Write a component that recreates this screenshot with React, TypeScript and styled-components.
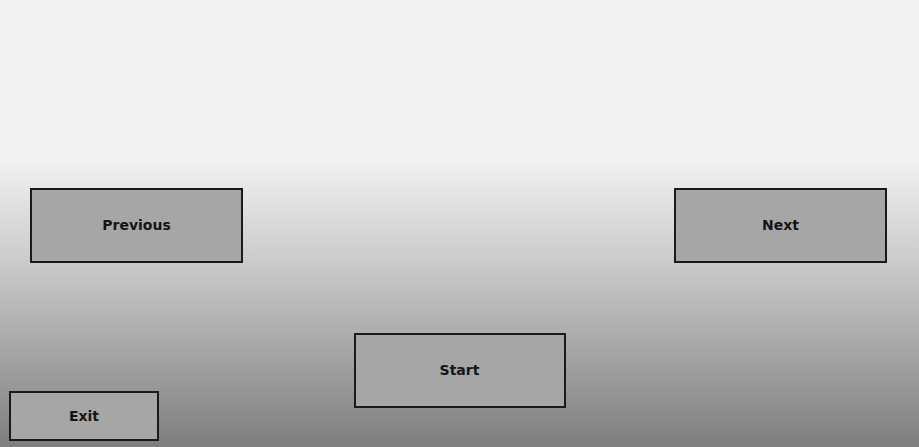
import React from 'react';
import styled, { createGlobalStyle } from 'styled-components';

const GlobalStyle = createGlobalStyle`
  html, body {
    margin: 0;
    padding: 0;
  }
  body {
    font-family: "DejaVu Sans", "Liberation Sans", sans-serif;
  }
`;

const Screen = styled.div`
  width: 100vw;
  height: 100vh;
  overflow: hidden;
  display: flex;
  flex-direction: column;
  background: linear-gradient(
    to bottom,
    #f2f2f2 0%,
    #f1f1f1 36%,
    #c8c8c8 60%,
    #7e7e7e 100%
  );
`;

const NavRow = styled.div`
  display: flex;
  justify-content: space-between;
  padding: 0 32px 0 30px;
  margin-top: 188px;
`;

const BottomArea = styled.div`
  flex: 1;
  display: grid;
  grid-template-columns: 1fr 212px 1fr;
  margin-top: 70px;
  padding-bottom: 6px;
`;

const Button = styled.button<{ $w: number; $h: number }>`
  box-sizing: border-box;
  width: ${({ $w }) => $w}px;
  height: ${({ $h }) => $h}px;
  background: #a6a6a6;
  border: 2px solid #1a1a1a;
  border-radius: 0;
  padding: 0 0 2px;
  color: #151515;
  font-family: "DejaVu Sans", "Liberation Sans", sans-serif;
  font-weight: bold;
  font-size: 14px;
  cursor: pointer;
`;

const StartButton = styled(Button)`
  grid-column: 2;
  grid-row: 1;
  align-self: start;
`;

const ExitButton = styled(Button)`
  grid-column: 1;
  grid-row: 1;
  align-self: end;
  justify-self: start;
  margin-left: 9px;
  padding: 0;
`;

const App: React.FC = () => {
  return (
    <>
      <GlobalStyle />
      <Screen>
        <NavRow>
          <Button $w={213} $h={75}>Previous</Button>
          <Button $w={213} $h={75}>Next</Button>
        </NavRow>
        <BottomArea>
          <StartButton $w={212} $h={75}>Start</StartButton>
          <ExitButton $w={150} $h={50}>Exit</ExitButton>
        </BottomArea>
      </Screen>
    </>
  );
};

export default App;
